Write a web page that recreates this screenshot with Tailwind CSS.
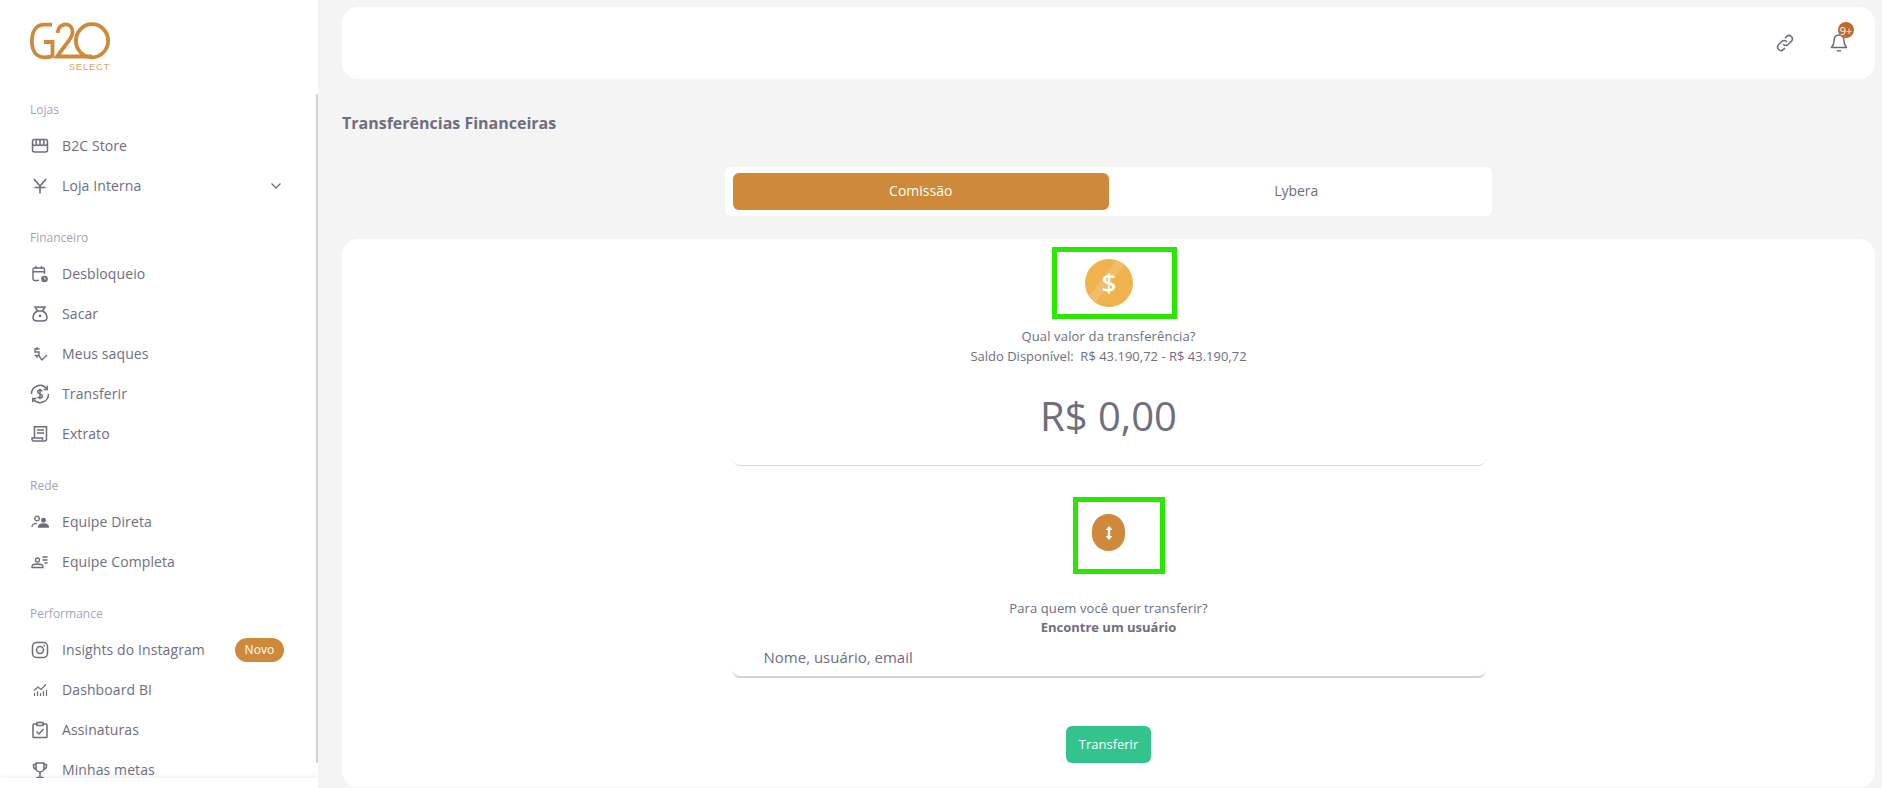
<!DOCTYPE html>
<html lang="pt-BR">
<head>
  <meta charset="UTF-8">
  <title>Transferências Financeiras</title>
  <script src="https://cdn.jsdelivr.net/npm/@tailwindcss/browser@4"></script>
</head>
<body class="flex h-[788px] overflow-hidden bg-[#f4f4f4] font-['Open_Sans',sans-serif] text-[#6e6e80]">

<!-- Sidebar -->
<aside class="relative w-[318px] h-full shrink-0 overflow-hidden bg-white">
  <div class="h-[100px] pl-[30px] pt-[22px]">
    <div class="relative w-[80px] h-[50px]">
      <svg width="80" height="38" viewBox="0 0 80 38" fill="none" stroke="#ce8a3a" stroke-width="3.800">
        <path d="M22 2.600 H14.500 C6 2.600 1.900 9.500 1.900 19 C1.900 28.500 6 35.300 14.500 35.300 C18 35.300 20.500 35 22.500 34 V20 H14"/>
        <path d="M27.500 11 C28 5 32 2.300 35.500 2.300 C40 2.300 42.500 6 42.500 10 C42.500 15 39 19 35.500 23 L27 34.500 H62"/>
        <ellipse cx="62" cy="18.800" rx="16.100" ry="16.600"/>
      </svg>
      <span class="absolute right-0 top-[40px] text-[9.500px] leading-[10px] tracking-[0.7px] text-[#dba35f] font-['Liberation_Sans',sans-serif]">SELECT</span>
    </div>
  </div>

  <nav class="pl-[30px] pr-[34px]">
    <div class="h-5 mb-1.5 text-xs leading-5 text-[#a6a4b8]">Lojas</div>
    <a class="flex items-center h-10 text-sm tracking-[0.1px]">
      <svg class="w-[18px] h-[18px] ml-px mr-[13px] shrink-0" viewBox="0 0 18 18" fill="none" stroke="#6e6b7b" stroke-width="1.500"><rect x="1.500" y="2.500" width="15" height="12.500" rx="2"/><path d="M1.500 7 C3 9 5 9 5.500 7 C6 9 8.500 9 9 7 C9.500 9 12 9 12.500 7 C13 9 15 9 16.500 7 M5.500 2.500 L5 7 M9 2.500 V7 M12.500 2.500 L13 7"/></svg>
      B2C Store
    </a>
    <a class="flex items-center h-10 text-sm tracking-[0.1px]">
      <svg class="w-[18px] h-[18px] ml-px mr-[13px] shrink-0" viewBox="0 0 18 18" fill="none" stroke="#6e6b7b" stroke-width="1.600"><path d="M3 2 L9 9 L15 2 M9 9 V16.500 M3.500 10.500 H14.500"/></svg>
      Loja Interna
      <svg class="ml-auto mr-[2px]" width="12" height="12" viewBox="0 0 12 12" fill="none" stroke="#6e6b7b" stroke-width="1.300"><path d="M1.500 3.500 L6 8 L10.500 3.500"/></svg>
    </a>

    <div class="h-5 mb-1.5 mt-[22px] text-xs leading-5 text-[#a6a4b8]">Financeiro</div>
    <a class="flex items-center h-10 text-sm tracking-[0.1px]">
      <svg class="w-[18px] h-[18px] ml-px mr-[13px] shrink-0" viewBox="0 0 18 18" fill="none" stroke="#6e6b7b" stroke-width="1.400"><path d="M8 15.500 H3.500 a1.500 1.500 0 0 1 -1.500 -1.500 V4.500 a1.500 1.500 0 0 1 1.500 -1.500 H12 a1.500 1.500 0 0 1 1.500 1.500 V9 M2 6.800 H13.500 M5 1 V4 M10.500 1 V4"/><circle cx="13.500" cy="14" r="3.300" fill="#6e6b7b" stroke="none"/><path d="M13.500 12.500 V14 H15" stroke="#fff" stroke-width="0.800"/></svg>
      Desbloqueio
    </a>
    <a class="flex items-center h-10 text-sm tracking-[0.1px]">
      <svg class="w-[18px] h-[18px] ml-px mr-[13px] shrink-0" viewBox="0 0 18 18" fill="none" stroke="#6e6b7b" stroke-width="1.500"><path d="M4 2 H14 L11.500 6 H6.500 Z"/><path d="M6.500 6 C3.500 7.500 2 10 2 12.500 C2 15 4 16 6.500 16 H11.500 C14 16 16 15 16 12.500 C16 10 14.500 7.500 11.500 6"/><circle cx="9" cy="11" r="1.300" fill="#6e6b7b" stroke="none"/></svg>
      Sacar
    </a>
    <a class="flex items-center h-10 text-sm tracking-[0.1px]">
      <svg class="w-[18px] h-[18px] ml-px mr-[13px] shrink-0" viewBox="0 0 18 18" fill="none" stroke="#6e6b7b" stroke-width="1.400"><path d="M8.500 4 H4 V7 H8 V10.500 H3.500 M6 2 V4 M6 10.500 V13"/><path d="M8 11 L11 15 L16 10"/></svg>
      Meus saques
    </a>
    <a class="flex items-center h-10 text-sm tracking-[0.1px]">
      <svg class="w-[18px] h-[18px] ml-px mr-[13px] shrink-0 overflow-visible" viewBox="0 0 18 18" fill="none" stroke="#6e6b7b" stroke-width="1.500"><path d="M0.500 9 A8.500 8.500 0 0 1 15.500 3.500 M17.500 9 A8.500 8.500 0 0 1 2.500 14.500"/><path d="M16.300 0.800 V4.500 H12.500 M1.700 17.200 V13.500 H5.500"/><path d="M11.300 6.200 C10.500 5.400 9.800 5.100 9 5.100 C7.500 5.100 6.700 5.900 6.700 7 C6.700 9.500 11.500 8.300 11.500 11 C11.500 12.200 10.500 13 9 13 C8 13 7.200 12.600 6.500 12 M9 3.800 V14.200"/></svg>
      Transferir
    </a>
    <a class="flex items-center h-10 text-sm tracking-[0.1px]">
      <svg class="w-[18px] h-[18px] ml-px mr-[13px] shrink-0" viewBox="0 0 18 18" fill="none" stroke="#6e6b7b" stroke-width="1.500"><path d="M3.500 13 V1.800 H15.500 V14 A2 2 0 0 1 13.500 16 H2.500 A1.700 1.700 0 0 1 1 14.500 V13 H11.500 V15"/><path d="M6 5 H13 M6 8 H13"/></svg>
      Extrato
    </a>

    <div class="h-5 mb-1.5 mt-[22px] text-xs leading-5 text-[#a6a4b8]">Rede</div>
    <a class="flex items-center h-10 text-sm tracking-[0.1px]">
      <svg class="w-[18px] h-[18px] ml-px mr-[13px] shrink-0" viewBox="0 0 18 18" fill="none" stroke="#6e6b7b" stroke-width="1.300"><circle cx="6" cy="5.500" r="2.300"/><path d="M0.800 14 C1.200 11.500 3 10.300 6 10.300"/><circle cx="12.500" cy="7.300" r="1.800" fill="#6e6b7b"/><path d="M7.500 14 C7.800 12 9.800 11 12.500 11 C15.200 11 17 12 17.500 14 Z" fill="#6e6b7b"/></svg>
      Equipe Direta
    </a>
    <a class="flex items-center h-10 text-sm tracking-[0.1px]">
      <svg class="w-[18px] h-[18px] ml-px mr-[13px] shrink-0" viewBox="0 0 18 18" fill="none" stroke="#6e6b7b" stroke-width="1.300"><circle cx="6.500" cy="7" r="2"/><path d="M1 14.500 V13.500 C1 12 3.500 11 6.500 11 C9.500 11 12 12 12 13.500 V14.500 Z"/><path d="M11.500 4 H16.500 M11.500 7 H16.500 M13.500 10 H16.500"/></svg>
      Equipe Completa
    </a>

    <div class="h-5 mb-1.5 mt-[22px] text-xs leading-5 text-[#a6a4b8]">Performance</div>
    <a class="flex items-center h-10 text-sm tracking-[0.1px]">
      <svg class="w-[18px] h-[18px] ml-px mr-[13px] shrink-0" viewBox="0 0 18 18" fill="none" stroke="#6e6b7b" stroke-width="1.500"><rect x="1.500" y="1.500" width="15" height="15" rx="4"/><circle cx="9" cy="9" r="3.500"/><circle cx="13.300" cy="4.700" r="0.900" fill="#6e6b7b" stroke="none"/></svg>
      Insights do Instagram
      <span class="ml-auto flex items-center justify-center w-[49px] h-6 rounded-full bg-[#ce8a3a] text-xs text-white">Novo</span>
    </a>
    <a class="flex items-center h-10 text-sm tracking-[0.1px]">
      <svg class="w-[18px] h-[18px] ml-px mr-[13px] shrink-0" viewBox="0 0 18 18" fill="none" stroke="#6e6b7b" stroke-width="1.200"><path d="M3.500 12 V15 M6.500 10.500 V15 M9.500 12 V15 M12.500 10 V15 M15.500 9 V15"/><path d="M3 9.500 L7 6 L10 8.500 L15 3.500"/></svg>
      Dashboard BI
    </a>
    <a class="flex items-center h-10 text-sm tracking-[0.1px]">
      <svg class="w-[18px] h-[18px] ml-px mr-[13px] shrink-0" viewBox="0 0 18 18" fill="none" stroke="#6e6b7b" stroke-width="1.500"><path d="M6 3 H3 A1 1 0 0 0 2 4 V15.500 A1 1 0 0 0 3 16.500 H15 A1 1 0 0 0 16 15.500 V4 A1 1 0 0 0 15 3 H12"/><rect x="6" y="1.500" width="6" height="3"/><path d="M5.500 10.500 L8 13 L12.500 8"/></svg>
      Assinaturas
    </a>
    <a class="flex items-center h-10 text-sm tracking-[0.1px]">
      <svg class="w-[18px] h-[18px] ml-px mr-[13px] shrink-0" viewBox="0 0 18 18" fill="none" stroke="#6e6b7b" stroke-width="1.500"><path d="M5 2 H13 V7 A4 4 0 0 1 5 7 Z"/><path d="M5 3.500 H2.500 V5 C2.500 7 3.500 8 5.300 8.500 M13 3.500 H15.500 V5 C15.500 7 14.500 8 12.700 8.500 M9 11 V16 M5.500 16.500 H12.500"/></svg>
      Minhas metas
    </a>
  </nav>

  <!-- sidebar scrollbar and footer strip -->
  <div class="absolute right-0 top-[94px] w-[2px] h-[669px] bg-[#d2d2da]"></div>
  <div class="absolute left-0 bottom-0 w-full h-[10px] bg-white shadow-[0_-2px_4px_rgba(0,0,0,0.06)]"></div>
</aside>

<!-- Main Content -->
<main class="w-[1533px] ml-6 pt-[7px]">
  <header class="flex items-center justify-end h-[72px] pr-[20px] rounded-2xl bg-white">
    <svg class="mr-[34px]" width="20" height="20" viewBox="0 0 20 20" fill="none" stroke="#6e6b7b" stroke-width="1.500" stroke-linecap="round"><path d="M8.500 11.500 A3.300 3.300 0 0 0 13.200 11.500 L16.500 8.200 A3.400 3.400 0 0 0 11.700 3.400 L10.500 4.600"/><path d="M11.500 8.500 A3.300 3.300 0 0 0 6.800 8.500 L3.500 11.800 A3.400 3.400 0 0 0 8.300 16.600 L9.500 15.400"/></svg>
    <div class="relative w-[20px] h-[20px] mr-[6px]">
      <svg width="20" height="20" viewBox="0 0 20 20" fill="none" stroke="#6e6b7b" stroke-width="1.500" stroke-linecap="round" stroke-linejoin="round"><path d="M10 2 C6.500 2 5 5 5 8 C5 11.500 3.800 13 2.500 14.500 H17.500 C16.200 13 15 11.500 15 8 C15 5 13.500 2 10 2 Z"/><path d="M8.500 17.800 H11.500"/></svg>
      <span class="absolute left-[9px] top-[-11px] flex items-center justify-center w-4 h-4 rounded-full bg-[#bd6a2a] text-[11px] leading-none text-white">9+</span>
    </div>
  </header>

  <h1 class="mt-8 h-6 text-base leading-6 font-bold">Transferências Financeiras</h1>

  <div class="flex w-[767px] h-[49px] mx-auto mt-8 px-2 py-1.5 rounded-md bg-white text-sm">
    <button class="flex-1 pb-px rounded-md bg-[#ce8a3a] font-medium text-white">Comissão</button>
    <button class="flex-1 pb-px">Lybera</button>
  </div>

  <section class="flex flex-col items-center h-[548px] mt-[23px] pt-2 rounded-2xl bg-white text-[13px]">
    <div class="flex items-center w-[125px] h-[72px] ml-3 pl-7 border-[5px] border-[#2ae600]">
      <div class="relative flex items-center justify-center w-12 h-12 pb-0.5 overflow-hidden rounded-full bg-[#f0b24f] text-[26px] font-semibold text-white">
        <span class="absolute left-[16px] top-[-12px] w-[9px] h-[70px] rotate-[38deg] bg-white/15"></span>
        <span class="relative">$</span>
      </div>
    </div>
    <p class="mt-[7px] h-5 leading-5 tracking-[0.15px]">Qual valor da transferência?</p>
    <p class="h-5 leading-5">Saldo Disponível:&nbsp; R$ 43.190,72 - R$ 43.190,72</p>
    <div class="mt-5 h-[60px] text-[40px] leading-[60px]">R$ 0,00</div>
    <div class="w-[754px] h-5 border-b border-[#d8d6de] rounded-b-lg"></div>

    <div class="w-[92px] h-[77px] ml-[21px] mt-[31px] pl-[14px] pt-3 border-[5px] border-[#2ae600]">
      <div class="flex items-center justify-center w-[33px] h-[37px] rounded-full bg-[#ce8a3a]">
        <svg width="10" height="16" viewBox="0 0 10 16" fill="#fff"><path d="M5 1 L8.500 5 H6.200 V11 H8.500 L5 15 L1.500 11 H3.800 V5 H1.500 Z"/></svg>
      </div>
    </div>
    <p class="mt-6 h-5 leading-5 tracking-[0.1px]">Para quem você quer transferir?</p>
    <p class="h-[19px] leading-[19px] font-bold">Encontre um usuário</p>
    <input type="text" placeholder="Nome, usuário, email" class="block w-[754px] h-[41px] px-8 border-b-2 border-[#d0d4d9] rounded-b-lg text-[15px] outline-none placeholder:text-[#6e6e80]">
    <button class="w-[85px] h-[37px] mt-12 rounded-md bg-[#33c48d] font-medium text-white">Transferir</button>
  </section>
</main>

</body>
</html>
